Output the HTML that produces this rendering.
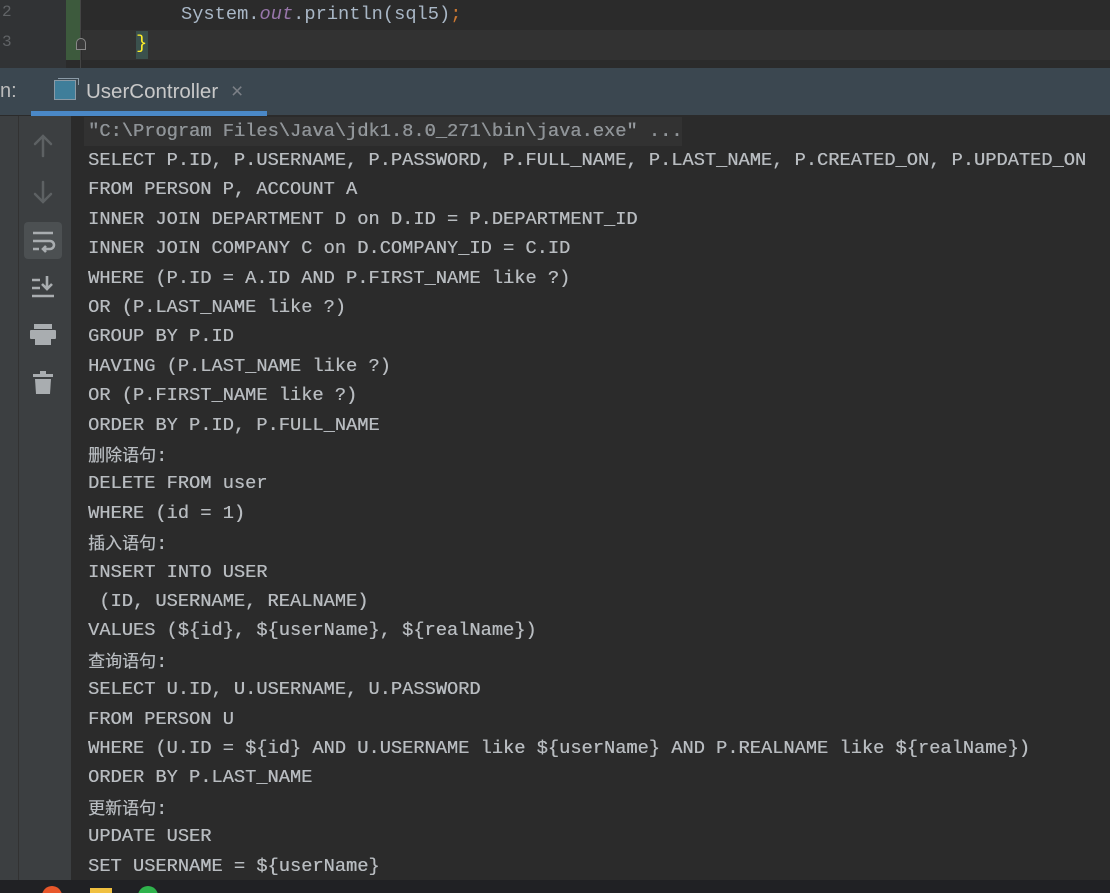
<!DOCTYPE html>
<html><head><meta charset="utf-8"><style>
html,body{margin:0;padding:0;width:1110px;height:893px;overflow:hidden;background:#2b2b2b;font-family:"Liberation Mono","Noto Sans CJK SC",monospace;position:relative}
.abs{position:absolute}
.code{color:#a9b7c6;font-size:18.7px;white-space:pre}
.ln{position:absolute;left:88px;font-size:18.7px;color:#b8bcc0;white-space:pre;line-height:29.4px;height:29.4px;text-shadow:0.3px 0 0 #b8bcc0}
.cn{font-family:"Noto Sans CJK SC",sans-serif;font-size:17px;line-height:29.4px}
</style></head><body>
<div class="abs" style="left:0;top:0;width:1110px;height:68px;background:#2b2b2b"></div>
<div class="abs" style="left:0;top:0;width:66px;height:68px;background:#313335"></div>
<div class="abs" style="left:66px;top:0;width:14px;height:60px;background:#3d5a3d"></div>
<div class="abs" style="left:80px;top:0;width:1px;height:68px;background:#444"></div>
<div class="abs" style="left:82px;top:30px;width:1028px;height:30px;background:#323232"></div>
<div class="abs code" style="left:2px;top:3px;color:#606366;font-size:16px">2</div>
<div class="abs code" style="left:2px;top:33px;color:#606366;font-size:16px">3</div>
<div class="abs code" style="left:181px;top:3px">System.<i style="color:#9876aa">out</i>.println(sql5)<span style="color:#cc7832">;</span></div>
<div class="abs" style="left:136px;top:31px;width:12px;height:28px;background:#3b514d"></div>
<div class="abs code" style="left:136px;top:32px;color:#ffef28">}</div>
<div class="abs" style="left:76px;top:38px;width:10px;height:12px;border:1px solid #888;border-radius:5px 5px 0 0;box-sizing:border-box;background:#3a3a3a"></div>
<div class="abs" style="left:0;top:68px;width:1110px;height:47px;background:#3b4750"></div>
<div class="abs" style="left:0;top:80px;color:#bbb;font-family:'Liberation Sans',sans-serif;font-size:20px">n:</div>
<div class="abs" style="left:54px;top:80px;width:22px;height:20px;border:1.5px solid #8a9aa6;box-sizing:border-box;background:#3f7e9a"></div>
<div class="abs" style="left:58px;top:78px;width:20px;height:6px;border-top:1.5px solid #8a9aa6;border-right:1.5px solid #8a9aa6"></div>
<div class="abs" style="left:86px;top:80px;color:#c8c8c8;font-family:'Liberation Sans',sans-serif;font-size:20.5px">UserController</div>
<div class="abs" style="left:231px;top:80px;color:#7c8087;font-family:'Liberation Sans',sans-serif;font-size:21px">×</div>
<div class="abs" style="left:31px;top:111px;width:236px;height:5px;background:#4a88c7"></div>
<div class="abs" style="left:0;top:116px;width:18px;height:764px;background:#3c3f41"></div>
<div class="abs" style="left:18px;top:116px;width:52px;height:764px;background:#3c3f41;border-left:1px solid #323232"></div>
<svg class="abs" style="left:18px;top:116px" width="52" height="300" viewBox="0 0 52 300">
<g stroke="#5d6163" stroke-width="2.5" fill="none" stroke-linecap="round">
<path d="M25 40V20M17 28l8-8 8 8"/><path d="M25 66v20M17 78l8 8 8-8"/></g>
<rect x="6" y="106" width="38" height="37" rx="4" fill="#4c5052"/>
<g stroke="#a9adb0" stroke-width="2.6" fill="none">
<path d="M15 117h20M15 125h17a4 4 0 0 1 0 8h-6M15 133h6"/><path d="M28 130l-3 3 3 3"/>
<path d="M14 164h8M14 172h8M14 180h22M29 160v13M24 168l5 5 5-5"/></g>
<g fill="#a9adb0"><rect x="16" y="208" width="18" height="5"/><rect x="12" y="214" width="26" height="9" rx="1"/><rect x="17" y="222" width="16" height="7"/>
<rect x="15" y="258" width="20" height="3"/><rect x="22" y="255" width="6" height="3"/><path d="M17 263h16l-1 15H18z"/></g>
</svg>
<div class="abs" style="left:84px;top:117px;width:598px;height:29px;background:#323232"></div>
<div class="ln" style="top:116.5px;color:#8d9296">"C:\Program Files\Java\jdk1.8.0_271\bin\java.exe" ...</div>
<div class="ln" style="top:145.9px">SELECT P.ID, P.USERNAME, P.PASSWORD, P.FULL_NAME, P.LAST_NAME, P.CREATED_ON, P.UPDATED_ON</div>
<div class="ln" style="top:175.3px">FROM PERSON P, ACCOUNT A</div>
<div class="ln" style="top:204.7px">INNER JOIN DEPARTMENT D on D.ID = P.DEPARTMENT_ID</div>
<div class="ln" style="top:234.1px">INNER JOIN COMPANY C on D.COMPANY_ID = C.ID</div>
<div class="ln" style="top:263.5px">WHERE (P.ID = A.ID AND P.FIRST_NAME like ?)</div>
<div class="ln" style="top:292.9px">OR (P.LAST_NAME like ?)</div>
<div class="ln" style="top:322.3px">GROUP BY P.ID</div>
<div class="ln" style="top:351.7px">HAVING (P.LAST_NAME like ?)</div>
<div class="ln" style="top:381.1px">OR (P.FIRST_NAME like ?)</div>
<div class="ln" style="top:410.5px">ORDER BY P.ID, P.FULL_NAME</div>
<div class="ln" style="top:438.9px"><span class="cn">删除语句</span>:</div>
<div class="ln" style="top:469.3px">DELETE FROM user</div>
<div class="ln" style="top:498.7px">WHERE (id = 1)</div>
<div class="ln" style="top:527.1px"><span class="cn">插入语句</span>:</div>
<div class="ln" style="top:557.5px">INSERT INTO USER</div>
<div class="ln" style="top:586.9px"> (ID, USERNAME, REALNAME)</div>
<div class="ln" style="top:616.3px">VALUES (${id}, ${userName}, ${realName})</div>
<div class="ln" style="top:644.7px"><span class="cn">查询语句</span>:</div>
<div class="ln" style="top:675.1px">SELECT U.ID, U.USERNAME, U.PASSWORD</div>
<div class="ln" style="top:704.5px">FROM PERSON U</div>
<div class="ln" style="top:733.9px">WHERE (U.ID = ${id} AND U.USERNAME like ${userName} AND P.REALNAME like ${realName})</div>
<div class="ln" style="top:763.3px">ORDER BY P.LAST_NAME</div>
<div class="ln" style="top:791.7px"><span class="cn">更新语句</span>:</div>
<div class="ln" style="top:822.1px">UPDATE USER</div>
<div class="ln" style="top:851.5px">SET USERNAME = ${userName}</div>
<div class="abs" style="left:0;top:880px;width:1110px;height:13px;background:#202124;overflow:hidden">
<div class="abs" style="left:42px;top:6px;width:20px;height:20px;border-radius:50%;background:#e8572a"></div>
<div class="abs" style="left:90px;top:8px;width:22px;height:5px;background:#f0c040"></div>
<div class="abs" style="left:138px;top:6px;width:20px;height:20px;border-radius:50%;background:#2fb24c"></div>
</div>
</body></html>
